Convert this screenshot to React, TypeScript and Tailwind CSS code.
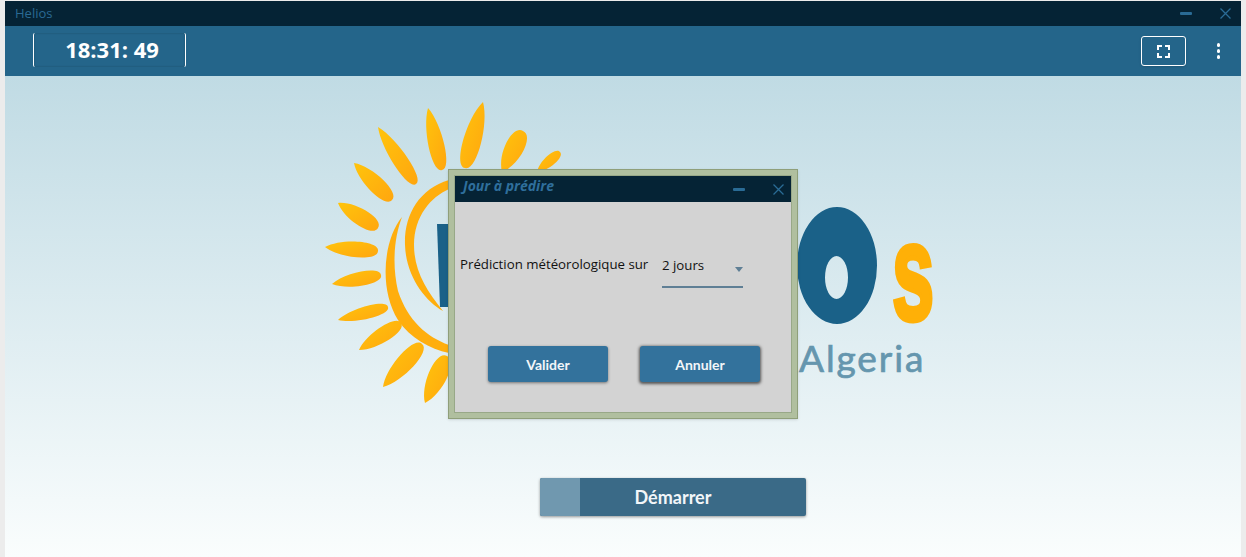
// tip x, tip y, base x, base y, width
const petals: [number, number, number, number, number][] = [
  [483, 102, 465, 168, 24],
  [428, 108, 442, 170, 21],
  [378, 127, 416, 184, 20],
  [354, 163, 392, 200, 22],
  [338, 203, 378, 228, 22],
  [325, 247, 378, 251, 21],
  [332, 284, 381, 275, 19],
  [338, 320, 388, 307, 17],
  [359, 350, 401, 323, 20],
  [383, 387, 422, 344, 23],
  [425, 403, 447, 356, 25],
  [502, 172, 523, 131, 25],
  [537, 172, 560, 152, 14],
];

function petalPath([x1, y1, x2, y2, w]: [number, number, number, number, number]) {
  const dx = x2 - x1;
  const dy = y2 - y1;
  const len = Math.hypot(dx, dy);
  const nx = (-dy / len) * (w / 2);
  const ny = (dx / len) * (w / 2);
  const ax = x1 + dx * 0.3;
  const ay = y1 + dy * 0.3;
  const bx = x1 + dx * 1.02;
  const by = y1 + dy * 1.02;
  return `M${x1} ${y1} C${ax + nx} ${ay + ny} ${bx + nx} ${by + ny} ${x2} ${y2} C${bx - nx} ${by - ny} ${ax - nx} ${ay - ny} ${x1} ${y1}Z`;
}

function HeliosLogo() {
  return (
    <svg viewBox="325 102 610 303" className="ml-[320px] mt-[26px] h-[303px] w-[610px] shrink-0">
      <defs>
        <linearGradient id="petal" x1="0" y1="0" x2="1" y2="1">
          <stop offset="0" stopColor="#ffc40c" />
          <stop offset="1" stopColor="#ffa60f" />
        </linearGradient>
      </defs>
      {petals.map((p, i) => (
        <path key={i} d={petalPath(p)} fill="url(#petal)" />
      ))}
      <path
        d="M402 217C383 240 379 290 398 320C410 338 430 349 449 353L449 345C427 337 408 321 398 291C392 265 394 238 402 217Z"
        fill="#ffae0d"
      />
      <path
        d="M449 180C419 189 404 215 405 245C406 276 425 301 443 311C426 290 414 270 414 245C414 216 431 197 449 189Z"
        fill="#ffae0d"
      />
      <path d="M437 224H452V307H440Z" fill="#1a6188" />
      <path
        fillRule="evenodd"
        d="M797 265.5a40 58.5 0 1 0 80 0a40 58.5 0 1 0 -80 0ZM825 277.5a11.5 21.5 0 1 0 23 0a11.5 21.5 0 1 0 -23 0Z"
        fill="#1a6188"
      />
      <text
        transform="translate(892 320) scale(0.55 1)"
        fontFamily="'Liberation Sans', sans-serif"
        fontWeight="700"
        fontSize="138"
        fill="#ffb007"
        stroke="#ffb007"
        strokeWidth="5"
      >
        s
      </text>
      <text
        x="799"
        y="372"
        fontFamily="Lato, sans-serif"
        fontWeight="400"
        fontSize="37"
        letterSpacing="1.9"
        fill="#6596ae"
        stroke="#6596ae"
        strokeWidth="0.7"
      >
        Algeria
      </text>
    </svg>
  );
}

function WindowButtons() {
  return (
    <>
      <svg width="12" height="3" viewBox="0 0 12 3" className="shrink-0">
        <rect width="12" height="3" rx="1" fill="#2a6b95" />
      </svg>
      <svg width="11" height="11" viewBox="0 0 11 11" className="shrink-0">
        <path d="M.5.5l10 10M10.5.5l-10 10" stroke="#2a6b95" strokeWidth="1.3" fill="none" />
      </svg>
    </>
  );
}

function JourDialog() {
  return (
    <div className="absolute left-[448px] top-[169px] flex h-[250px] w-[350px] border border-[#8f9f7a] bg-[#b0bf9f] p-[6px] shadow-sm">
      <div className="flex flex-1 flex-col bg-[#d3d3d3] font-['Open_Sans',sans-serif] outline outline-[#98a888]">
        <div className="flex h-[26px] shrink-0 items-center bg-[#052335] pl-2 pr-[7px]">
          <span className="-mt-[8px] flex-1 text-[14px] font-bold italic text-[#2f6f9c]">Jour à prédire</span>
          <div className="flex items-center gap-[28px] pt-[1px]">
            <WindowButtons />
          </div>
        </div>
        <div className="mt-[53px] flex items-start pl-[5px]">
          <span className="w-[202px] text-[13.25px] leading-[18px] text-[#111]">Prédiction météorologique sur</span>
          <div className="flex h-[33px] w-[81px] items-start justify-between border-b-2 border-[#5f7f95]">
            <span className="text-[13.25px] leading-[20px] text-[#111]">2 jours</span>
            <svg width="8" height="5" viewBox="0 0 8 5" className="mt-[12px]">
              <path d="M0 0h8L4 5Z" fill="#5f7f95" />
            </svg>
          </div>
        </div>
        <div className="ml-[33px] mt-[58px] flex gap-[32px] font-['Lato',sans-serif]">
          <button className="h-[36px] w-[120px] rounded-[3px] bg-[#33729c] text-[14px] font-bold text-[#f2f6f9] shadow-[0_1px_3px_rgba(0,0,0,0.45)]">
            Valider
          </button>
          <button className="h-[36px] w-[120px] rounded-[3px] bg-[#33729c] text-[14px] font-bold text-[#f2f6f9] shadow-[0_1px_3px_1px_rgba(0,0,0,0.6)]">
            Annuler
          </button>
        </div>
      </div>
    </div>
  );
}

export default function App() {
  return (
    <div className="relative h-[557px] w-[1246px] overflow-hidden bg-[#ececec] pl-[5px] pr-[5px] pt-[1px]">
      <div className="flex h-[556px] flex-col">
        {/* Title bar */}
        <div className="flex h-[25px] shrink-0 items-center justify-between bg-[#052335] pl-[10px] pr-[10px]">
          <span className="mt-[1px] font-['Open_Sans',sans-serif] text-[13px] text-[#2a6a93]">Helios</span>
          <div className="flex items-center gap-[28px]">
            <WindowButtons />
          </div>
        </div>

        {/* Toolbar */}
        <div className="flex h-[50px] shrink-0 items-center justify-between bg-[#24658a] pl-[28px] pr-[21px]">
          <div className="-mt-[3px] flex h-[34px] w-[153px] items-center justify-center rounded-[2px] border-x border-white pl-[5px] shadow-[inset_0_0_2px_rgba(0,0,0,0.25)]">
            <span className="font-['Open_Sans',sans-serif] text-[22px] font-bold text-white">18:31: 49</span>
          </div>
          <div className="flex items-center gap-[31px]">
            <div className="flex h-[30px] w-[45px] items-center justify-center rounded-[3px] border border-white shadow-sm">
              <svg width="13" height="13" viewBox="0 0 13 13">
                <path d="M1 5V1h4M8 1h4v4M12 8v4H8M5 12H1V8" stroke="white" strokeWidth="2" fill="none" />
              </svg>
            </div>
            <div className="flex flex-col gap-[2.5px]">
              <span className="h-[3.5px] w-[3.5px] rounded-full bg-white" />
              <span className="h-[3.5px] w-[3.5px] rounded-full bg-white" />
              <span className="h-[3.5px] w-[3.5px] rounded-full bg-white" />
            </div>
          </div>
        </div>

        {/* Main area */}
        <div className="flex flex-1 flex-col items-start bg-gradient-to-b from-[#c0dbe4] to-[#fafdfd]">
          <HeliosLogo />
          <button className="relative ml-[535px] mt-[73px] h-[38px] w-[266px] shrink-0 overflow-hidden rounded-[2px] bg-[#3a6a87] font-['Lato',sans-serif] text-[18px] font-bold text-[#f2f6f9] shadow-[0_1px_3px_rgba(0,0,0,0.4)]">
            <span className="absolute inset-y-0 left-0 w-[40px] bg-[#7098af]" />
            <span className="relative">Démarrer</span>
          </button>
        </div>
      </div>

      <JourDialog />
    </div>
  );
}
